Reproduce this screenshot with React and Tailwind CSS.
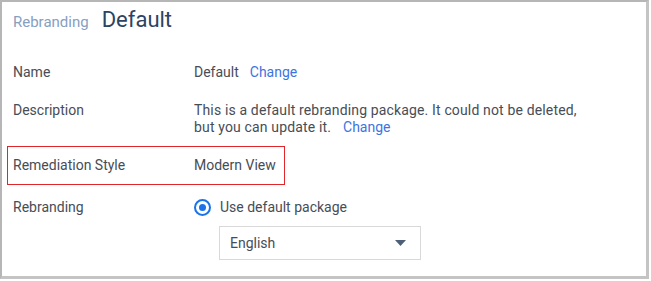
import React from 'react';

const Row = ({ label, children, className = '' }) => (
  <div className={`flex items-start ${className}`}>
    <div className="w-[181px] shrink-0">{label}</div>
    <div className="flex-1">{children}</div>
  </div>
);

export default function App() {
  return (
    <div className="w-[651px] h-[281px] bg-white" style={{ fontFamily: 'Roboto, "Noto Sans", sans-serif' }}>
      <div className="w-[649px] h-[279px] border-l-2 border-t-2 border-r-[3px] border-b-[3px] border-l-[#b6b6b6] border-t-[#b6b6b6] border-r-[#c4c4c4] border-b-[#c4c4c4] pl-[11px] pt-[6px] text-[14px] text-[#474d56]">
        <div className="flex items-baseline gap-[13px] h-[34px] leading-none pt-[1px]">
          <span className="text-[15px] text-[#86a0bf]">Rebranding</span>
          <span className="text-[22px] text-[#2d4463]">Default</span>
        </div>

        <Row label="Name" className="mt-[20px] leading-[20px]">
          <span>Default</span>
          <span className="ml-[11px] text-[#3d74e0]">Change</span>
        </Row>

        <Row label="Description" className="mt-[20px] leading-[17px]">
          <div className="tracking-[0.15px]">This is a default rebranding package. It could not be deleted,</div>
          <div className="flex">
            <span className="tracking-[0.15px]">but you can update it.</span>
            <span className="ml-[12px] text-[#3d74e0]">Change</span>
          </div>
        </Row>

        <div className="mt-[10px] -ml-[6px] w-[278px] h-[39px] border border-solid border-[color:#e0252b] flex items-center pl-[5px]">
          <div className="w-[181px] shrink-0">Remediation Style</div>
          <div>Modern View</div>
        </div>

        <Row label="Rebranding" className="mt-[14px] leading-[17px]">
          <div className="flex items-center gap-[9px] h-[17px]">
            <span className="w-[17px] h-[17px] rounded-full border-2 border-[#1a73e8] flex items-center justify-center">
              <span className="w-[7px] h-[7px] rounded-full bg-[#1a73e8]" />
            </span>
            <span>Use default package</span>
          </div>
          <div className="mt-[10px] ml-[25px] w-[202px] h-[34px] border border-[#d9d9d9] flex items-center justify-between pl-[10px] pr-[14px]">
            <span>English</span>
            <svg width="11" height="6" viewBox="0 0 11 6">
              <path d="M0 0 L11 0 L5.5 6 Z" fill="#4e5f78" />
            </svg>
          </div>
        </Row>
      </div>
    </div>
  );
}
